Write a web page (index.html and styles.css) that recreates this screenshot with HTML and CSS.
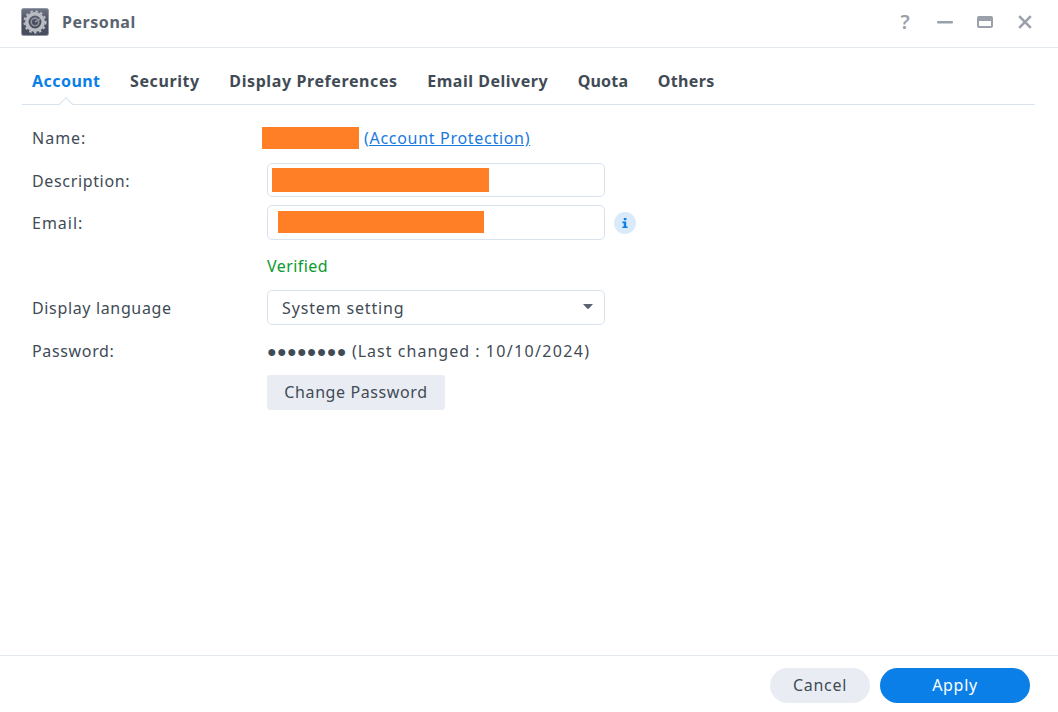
FILE: index.html
```html
<!DOCTYPE html>
<html lang="en">
<head>
<meta charset="utf-8">
<title>Personal</title>
<link rel="stylesheet" href="styles.css">
</head>
<body>
<div class="window">
  <header class="titlebar">
    <svg class="app-icon" width="28" height="28" viewBox="0 0 28 28" aria-hidden="true">
      <defs>
        <linearGradient id="bg" x1="0" y1="0" x2="0" y2="1">
          <stop offset="0" stop-color="#6f7685"/>
          <stop offset="0.5" stop-color="#484d5e"/>
          <stop offset="1" stop-color="#4a4f60"/>
        </linearGradient>
      </defs>
      <rect x="0.5" y="0.5" width="27" height="27" rx="2" fill="url(#bg)" stroke="#9499a4"/>
      <circle cx="14" cy="14" r="8.2" fill="none" stroke="#b9bcc3" stroke-width="3.6"/>
      <circle cx="14" cy="14" r="10.6" fill="none" stroke="#b9bcc3" stroke-width="2" stroke-dasharray="2.5 2.5"/>
      <circle cx="14" cy="14" r="3.8" fill="none" stroke="#8f939c" stroke-width="1.5"/>
      <path d="M14 14 L19 11" stroke="#8f939c" stroke-width="1.5"/>
    </svg>
    <div class="title">Personal</div>
    <div class="win-controls">
      <span class="help">?</span>
      <svg width="16" height="16" viewBox="0 0 16 16" aria-hidden="true"><rect x="0" y="7" width="16" height="2.6" rx="1" fill="#9aa1ab"/></svg>
      <svg width="16" height="16" viewBox="0 0 16 16" aria-hidden="true"><rect x="1" y="3" width="14" height="10" rx="1" fill="none" stroke="#9aa1ab" stroke-width="2"/><rect x="1" y="2.5" width="14" height="4.5" fill="#9aa1ab"/></svg>
      <svg width="16" height="16" viewBox="0 0 16 16" aria-hidden="true"><path d="M2.2 2.2 L13.8 13.8 M13.8 2.2 L2.2 13.8" stroke="#9aa1ab" stroke-width="2.6" fill="none"/></svg>
    </div>
  </header>

  <nav class="tabs">
    <span class="tab active">Account</span>
    <span class="tab">Security</span>
    <span class="tab">Display Preferences</span>
    <span class="tab tab-email">Email Delivery</span>
    <span class="tab tab-quota">Quota</span>
    <span class="tab tab-others">Others</span>
  </nav>

  <main class="form">
    <div class="row">
      <div class="label label-name">Name:</div>
      <div class="value name-value">
        <span class="redact redact-name"></span>
        <a class="link" href="#">(Account Protection)</a>
      </div>
    </div>
    <div class="row">
      <div class="label">Description:</div>
      <div class="field field-desc"><span class="redact redact-desc"></span></div>
    </div>
    <div class="row">
      <div class="label label-short">Email:</div>
      <div class="field field-email"><span class="redact redact-email"></span></div>
      <span class="info">
        <svg width="8" height="10" viewBox="0 0 8 10" aria-hidden="true"><rect x="2.8" y="0" width="2.6" height="2.2" fill="#0a7fe8"/><path d="M1.4 3.6 H5.2 V8.4 H6.6 V10 H1.4 V8.4 H2.8 V5.2 H1.4 Z" fill="#0a7fe8"/></svg>
      </span>
    </div>
    <div class="row">
      <div class="label"></div>
      <div class="value verified">Verified</div>
    </div>
    <div class="row">
      <div class="label">Display language</div>
      <div class="field select">
        <span class="select-text">System setting</span>
        <svg class="caret" width="10" height="5" viewBox="0 0 10 5" aria-hidden="true"><path d="M0 0 H10 L6 4.4 Q5 5.2 4 4.4 Z" fill="#5a6470"/></svg>
      </div>
    </div>
    <div class="row row-low">
      <div class="label">Password:</div>
      <div class="value pw"><span class="dots">●●●●●●●●</span> (Last changed : <span class="date">10/10/2024</span>)</div>
    </div>
    <div class="row">
      <div class="label"></div>
      <button class="btn-change" type="button">Change Password</button>
    </div>
  </main>

  <footer class="footer">
    <button class="pill pill-cancel" type="button">Cancel</button>
    <button class="pill pill-apply" type="button">Apply</button>
  </footer>
</div>
</body>
</html>
```
FILE: styles.css
```css
* { box-sizing: border-box; }
html, body { margin: 0; height: 100%; background: #fff; }
body {
  font-family: "Noto Sans", "Open Sans", sans-serif;
  font-size: 16px;
  letter-spacing: 0.65px;
  color: #414b55;
}
.window { height: 712px; display: flex; flex-direction: column; }

.titlebar {
  height: 48px;
  flex: none;
  display: flex;
  align-items: center;
  padding: 0 25px 3px 21px;
  border-bottom: 1px solid #e4e8ef;
}
.app-icon { flex: none; }
.title { margin-left: 13px; font-size: 16px; font-weight: 700; color: #5a6470; letter-spacing: 0.55px; }
.win-controls { margin-left: auto; display: flex; align-items: center; gap: 24px; }
.help { font-size: 20px; font-weight: 600; color: #9aa1ab; width: 16px; text-align: center; line-height: 16px; letter-spacing: 0; }

.tabs {
  flex: none;
  height: 57px;
  margin: 0 23px 0 22px;
  padding: 18px 10px 8px;
  display: flex;
  align-items: center;
  gap: 29.5px;
  border-bottom: 1px solid #d9e3ee;
  position: relative;
}
.tab { font-size: 16px; font-weight: 700; color: #414b55; letter-spacing: 0.6px; }
.tab.active { color: #0a7fe8; letter-spacing: 0.45px; }
.tab-email { letter-spacing: 0.52px; }
.tab-quota { letter-spacing: 0.2px; }
.tab-others { letter-spacing: 0.35px; }
.tabs::after {
  content: "";
  position: absolute;
  left: 39px;
  bottom: -5px;
  width: 9px;
  height: 9px;
  background: #fff;
  border-left: 1px solid #d9e3ee;
  border-top: 1px solid #d9e3ee;
  transform: rotate(45deg);
}

.form { flex: 1; padding: 15.6px 0 0 32px; display: flex; flex-direction: column; gap: 8px; }
.row { height: 34.4px; display: flex; align-items: center; }
.label { width: 235px; flex: none; padding-top: 1.4px; }
.label-name { padding-top: 0; letter-spacing: 1px; }
.label-short { letter-spacing: 1px; }
.value { flex: none; padding-top: 1.4px; }
.row-low .label, .row-low .value { padding-top: 2.4px; }
.name-value { display: flex; align-items: center; gap: 5px; margin-left: -5px; padding-top: 0; }
.link { color: #1a7ae0; text-decoration: underline; letter-spacing: 0.7px; }
.redact { display: block; background: #ff7f27; }
.redact-name { width: 97px; height: 22px; }
.redact-desc { width: 217px; height: 24px; }
.redact-email { width: 206px; height: 22px; margin-bottom: 1px; }
.field {
  width: 338px;
  height: 100%;
  flex: none;
  display: flex;
  align-items: center;
  border: 1px solid #d9e3ee;
  border-radius: 5px;
  background: #fff;
}
.field-desc { padding-left: 4px; }
.field-email { padding-left: 10px; }
.select { justify-content: space-between; padding: 0 11px 0 14px; }
.select-text { letter-spacing: 0.85px; padding-top: 2px; }
.caret { margin-bottom: 2px; }
.info {
  margin-left: 9px;
  width: 22px;
  height: 22px;
  border-radius: 50%;
  background: #d9eafb;
  display: flex;
  align-items: center;
  justify-content: center;
}
.verified { color: #0b9a2e; letter-spacing: 0.45px; }
.pw { letter-spacing: 1.02px; }
.dots { font-size: 16px; letter-spacing: 0.3px; }
.date { letter-spacing: 1.35px; }
.btn-change {
  width: 178px;
  height: 35px;
  border: 0;
  border-radius: 3px;
  background: #e9edf3;
  color: #414b55;
  font: inherit;
  letter-spacing: 0.6px;
  padding: 0 0 1px;
}

.footer {
  flex: none;
  height: 57px;
  padding: 12px 28px 0 0;
  border-top: 1px solid #e4e8ef;
  display: flex;
  justify-content: flex-end;
  align-items: flex-start;
  gap: 10px;
}
.pill { height: 35px; border: 0; border-radius: 18px; font: inherit; padding: 0 0 2px; letter-spacing: 0.7px; }
.pill-cancel { width: 100px; background: #e9edf3; color: #414b55; }
.pill-apply { width: 150px; background: #0a7fe8; color: #fff; }
```
